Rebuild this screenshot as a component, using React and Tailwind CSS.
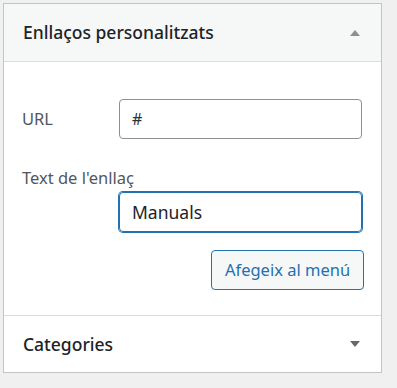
export default function App() {
  const font = { fontFamily: '"Noto Sans", "Open Sans", sans-serif' };
  return (
    <div className="min-h-[388px] w-[397px] bg-[#f0f0f1] pt-[3px] pl-[3px]" style={font}>
      <div className="w-[379px] border border-[#c3c4c7] bg-white">
        <div className="flex h-[58px] items-center justify-between border-b border-[#dcdcde] bg-[#f6f7f7] pl-[19px] pr-[21px]">
          <span className="text-[17.5px] font-medium text-[#1d2327]">Enllaços personalitzats</span>
          <svg width="10" height="6" viewBox="0 0 10 6"><path d="M0 6 L5 0 L10 6 Z" fill="#8c8f94" /></svg>
        </div>
        <div className="flex h-[254px] flex-col border-b border-[#dcdcde] pl-[18px] pt-[37px]">
          <div className="flex items-center">
            <span className="w-[97px] text-[16.5px] text-[#50575e]">URL</span>
            <div className="flex h-[40px] w-[243px] items-center rounded-[4px] border border-[#8c8f94] px-[12px] text-[16px] text-[#2c3338]">#</div>
          </div>
          <div className="mt-[29px] text-[16.5px] leading-[20px] text-[#50575e]">Text de l'enllaç</div>
          <div className="ml-[97px] mt-[4px] flex h-[40px] w-[243px] items-center rounded-[4px] border border-[#2271b1] px-[12px] text-[17.5px] text-[#1d2327] shadow-[0_0_0_1px_#2271b1]">Manuals</div>
          <div className="mt-[18px] flex w-[342px] justify-end">
            <div className="flex h-[40px] w-[153px] items-center justify-center rounded-[4px] border border-[#2271b1] bg-[#f6f7f7] text-[16.5px] text-[#2271b1]">Afegeix al menú</div>
          </div>
        </div>
        <div className="flex h-[56px] items-center justify-between pl-[19px] pr-[21px]">
          <span className="text-[17.5px] font-medium text-[#1d2327]">Categories</span>
          <svg width="10" height="6" viewBox="0 0 10 6"><path d="M0 0 L10 0 L5 6 Z" fill="#646970" /></svg>
        </div>
      </div>
    </div>
  );
}
